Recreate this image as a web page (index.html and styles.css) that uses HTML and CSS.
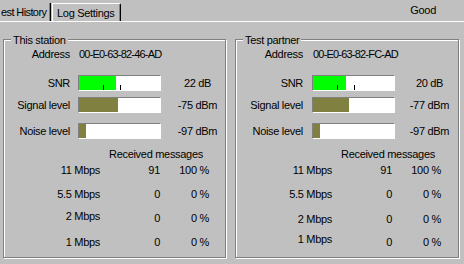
FILE: index.html
```html
<!DOCTYPE html>
<html>
<head>
<meta charset="utf-8">
<link rel="stylesheet" href="styles.css">
</head>
<body>
<div class="window">
  <div class="tabs">
    <div class="tab tab-cut">est History</div>
    <div class="tab tab-log">Log Settings</div>
    <div class="status">Good</div>
  </div>
  <div class="panel">
    <div class="group g1">
      <span class="legend">This station</span>
      <div class="mrow r-addr"><span class="lab">Address</span><span class="addr">00-E0-63-82-46-AD</span></div>
      <div class="mrow r-snr"><span class="lab">SNR</span><div class="bar"><div class="fill green" style="width:37px"></div><i class="tick t1"></i><i class="tick t2"></i></div><span class="val">22 dB</span></div>
      <div class="mrow r-sig"><span class="lab">Signal level</span><div class="bar"><div class="fill olive" style="width:39px"></div></div><span class="val">-75 dBm</span></div>
      <div class="mrow r-noise"><span class="lab">Noise level</span><div class="bar"><div class="fill olive" style="width:7px"></div></div><span class="val">-97 dBm</span></div>
      <div class="recv-head">Received messages</div>
      <div class="recv">
        <span>11 Mbps</span><span>91</span><span>100 %</span>
        <span>5.5 Mbps</span><span>0</span><span>0 %</span>
        <span class="hi1">2 Mbps</span><span>0</span><span>0 %</span>
        <span>1 Mbps</span><span>0</span><span>0 %</span>
      </div>
    </div>
    <div class="group g2">
      <span class="legend">Test partner</span>
      <div class="mrow r-addr"><span class="lab">Address</span><span class="addr">00-E0-63-82-FC-AD</span></div>
      <div class="mrow r-snr"><span class="lab">SNR</span><div class="bar"><div class="fill green" style="width:33px"></div><i class="tick t1"></i><i class="tick t2"></i></div><span class="val">20 dB</span></div>
      <div class="mrow r-sig"><span class="lab">Signal level</span><div class="bar"><div class="fill olive" style="width:36px"></div></div><span class="val">-77 dBm</span></div>
      <div class="mrow r-noise"><span class="lab">Noise level</span><div class="bar"><div class="fill olive" style="width:7px"></div></div><span class="val">-97 dBm</span></div>
      <div class="recv-head">Received messages</div>
      <div class="recv">
        <span>11 Mbps</span><span>91</span><span>100 %</span>
        <span>5.5 Mbps</span><span>0</span><span>0 %</span>
        <span class="lo1">2 Mbps</span><span class="lo1">0</span><span class="lo1">0 %</span>
        <span class="hi3">1 Mbps</span><span>0</span><span>0 %</span>
      </div>
    </div>
  </div>
</div>
</body>
</html>
```
FILE: styles.css
```css
html, body {
  margin: 0;
  padding: 0;
}
body {
  width: 464px;
  height: 264px;
  overflow: hidden;
  background: #c0c0c0;
  font-family: "Liberation Sans", Arial, sans-serif;
  font-size: 11px;
  line-height: 13px;
  letter-spacing: -0.3px;
  color: #000;
}
.window {
  width: 464px;
  height: 264px;
}
.tabs {
  display: flex;
  align-items: flex-end;
  height: 21px;
}
.tab {
  box-sizing: border-box;
  height: 18px;
  padding-top: 3px;
  white-space: nowrap;
  overflow: hidden;
  border-right: 1px solid #000;
  box-shadow: inset -1px 0 0 #808080;
}
.tab-cut {
  width: 51px;
  padding-left: 1px;
  letter-spacing: -0.6px;
}
.tab-log {
  margin-left: 1px;
  width: 69px;
  padding-left: 4px;
  border-left: 1px solid #fff;
  border-top: 1px solid #fff;
  border-top-right-radius: 2px;
}
.status {
  align-self: flex-start;
  margin-left: auto;
  margin-right: 28px;
  margin-top: 4px;
}
.panel {
  border-top: 1px solid #fff;
  padding: 17px 0 0 3px;
  display: flex;
  gap: 9px;
}
.group {
  box-sizing: border-box;
  height: 219px;
  border: 1px solid #808080;
  box-shadow: inset 1px 1px 0 #fff, 1px 1px 0 #fff;
  position: relative;
  padding-top: 8px;
}
.g1 {
  width: 223px;
  --c1: 66px;
  --g1: 8px;
  --g2: 14px;
}
.g2 {
  width: 224px;
  --c1: 67px;
  --g1: 9px;
  --g2: 12px;
}
.legend {
  position: absolute;
  top: -6px;
  left: 7px;
  padding: 0 2px;
  background: #c0c0c0;
  white-space: nowrap;
}
.mrow {
  display: grid;
  grid-template-columns: var(--c1) var(--g1) 83px var(--g2) 45px;
  align-items: center;
}
.r-addr { height: 13px; }
.r-snr { height: 16px; margin-top: 14px; }
.r-sig { height: 16px; margin-top: 6px; }
.r-noise { height: 16px; margin-top: 10px; }
.lab {
  grid-column: 1;
  text-align: right;
  white-space: nowrap;
}
.addr {
  grid-column: 3 / 6;
  padding-left: 1px;
  letter-spacing: -0.8px;
  white-space: nowrap;
}
.bar {
  grid-column: 3;
  box-sizing: border-box;
  width: 83px;
  height: 16px;
  background: #fff;
  border-top: 1px solid #808080;
  border-left: 1px solid #808080;
  border-right: 1px solid #fff;
  border-bottom: 1px solid #fff;
  position: relative;
}
.fill {
  height: 100%;
}
.green { background: #00ff00; }
.olive { background: #808040; }
.tick {
  position: absolute;
  bottom: 0;
  width: 1px;
  height: 5px;
  background: #000;
}
.t1 { left: 24px; }
.t2 { left: 41px; }
.val {
  grid-column: 5;
  text-align: center;
  white-space: nowrap;
}
.recv-head {
  margin-top: 9px;
  height: 13px;
  padding-left: 105px;
  white-space: nowrap;
}
.recv {
  display: grid;
  grid-template-columns: 96px 60px 49px;
  grid-auto-rows: 18px;
  row-gap: 6px;
  align-items: center;
  text-align: right;
  white-space: nowrap;
}
.hi1 {
  align-self: start;
  margin-top: 1px;
}
.hi3 {
  align-self: start;
}
.lo1 {
  align-self: end;
  margin-bottom: 1.5px;
}
```
